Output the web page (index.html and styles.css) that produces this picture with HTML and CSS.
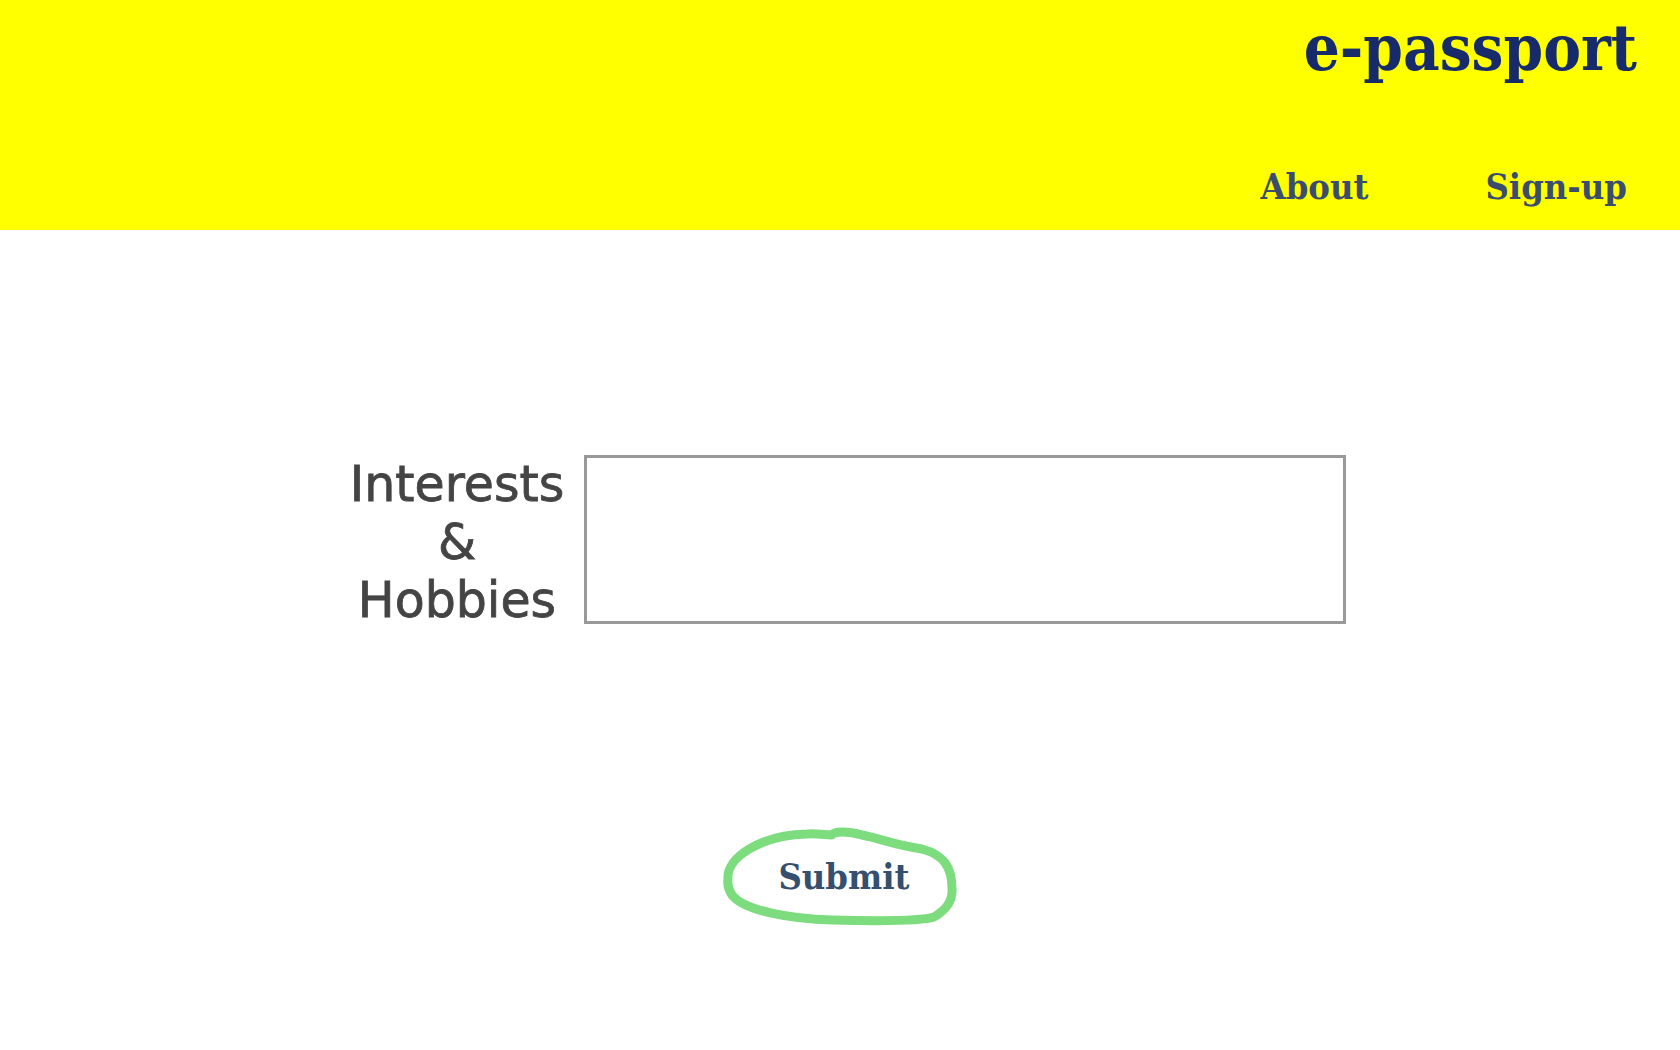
FILE: index.html
```html
<!DOCTYPE html>
<html lang="en">
<head>
<meta charset="utf-8">
<title>e-passport</title>
<link rel="stylesheet" href="styles.css">
</head>
<body>
<header class="site-header">
  <div class="brand">e-passport</div>
  <nav class="nav">
    <a class="nav-link" href="#">About</a>
    <a class="nav-link" href="#">Sign-up</a>
  </nav>
</header>
<main class="main">
  <form class="form">
    <div class="field">
      <label class="field-label" for="interests">Interests<br>&amp;<br>Hobbies</label>
      <textarea class="field-input" id="interests"></textarea>
    </div>
    <button class="submit" type="button">
      <svg class="submit-ring" viewBox="0 0 236 99" width="236" height="99" aria-hidden="true">
        <path d="M 6 52 C 4 30, 40 8, 85 7 C 95 6, 100 8, 110 8 C 112 4, 126 4, 140 8 C 160 12, 172 18, 200 22 C 222 28, 230 40, 230 62 C 231 76, 222 84, 212 90 C 200 94, 150 94, 110 93 C 70 92, 22 84, 10 68 C 6 62, 5 58, 6 52 Z" fill="none" stroke="#7cdc7e" stroke-width="9" stroke-linejoin="round" stroke-linecap="round"/>
      </svg>
      <span class="submit-text">Submit</span>
    </button>
  </form>
</main>
</body>
</html>
```
FILE: styles.css
```css
* { box-sizing: border-box; }
html, body { margin: 0; padding: 0; background: #fff; }
body { font-family: "DejaVu Sans", sans-serif; }

.site-header {
  background: #ffff00;
  height: 230px;
  display: flex;
  flex-direction: column;
  align-items: flex-end;
  padding: 12px 43px 0 0;
}
.brand {
  font-family: "DejaVu Serif Condensed", "DejaVu Serif", serif;
  font-stretch: condensed;
  font-weight: bold;
  font-size: 63px;
  line-height: 72px;
  color: #172b6b;
}
.nav {
  display: flex;
  gap: 117px;
  margin-top: 82px;
  padding-right: 10px;
}
.nav-link {
  font-family: "DejaVu Serif Condensed", "DejaVu Serif", serif;
  font-stretch: condensed;
  font-weight: bold;
  font-size: 36px;
  line-height: 40px;
  color: #3b4d6e;
  text-decoration: none;
}

.main { padding-top: 225px; }
.form {
  display: flex;
  flex-direction: column;
  align-items: center;
}
.field {
  display: flex;
  align-items: flex-start;
  gap: 20px;
  padding-left: 16px;
}
.field-label {
  font-family: "DejaVu Sans", sans-serif;
  font-weight: normal;
  font-size: 49px;
  line-height: 58px;
  color: #444;
  -webkit-text-stroke: 0.8px #444;
  text-align: center;
  margin-top: 1px;
}
.field-input {
  width: 762px;
  height: 169px;
  border: 3px solid #999;
  margin: 0;
  resize: none;
  background: #fff;
}
.submit {
  position: relative;
  margin-top: 197px;
  width: 236px;
  height: 99px;
  border: 0;
  background: transparent;
  padding: 0;
  display: flex;
  align-items: center;
  justify-content: center;
  cursor: pointer;
}
.submit-ring {
  position: absolute;
  left: 0;
  top: 0;
}
.submit-text {
  position: relative;
  font-family: "DejaVu Serif Condensed", "DejaVu Serif", serif;
  font-stretch: condensed;
  font-weight: bold;
  font-size: 36px;
  color: #35506f;
  margin-top: -2px;
  margin-left: 8px;
}
```
